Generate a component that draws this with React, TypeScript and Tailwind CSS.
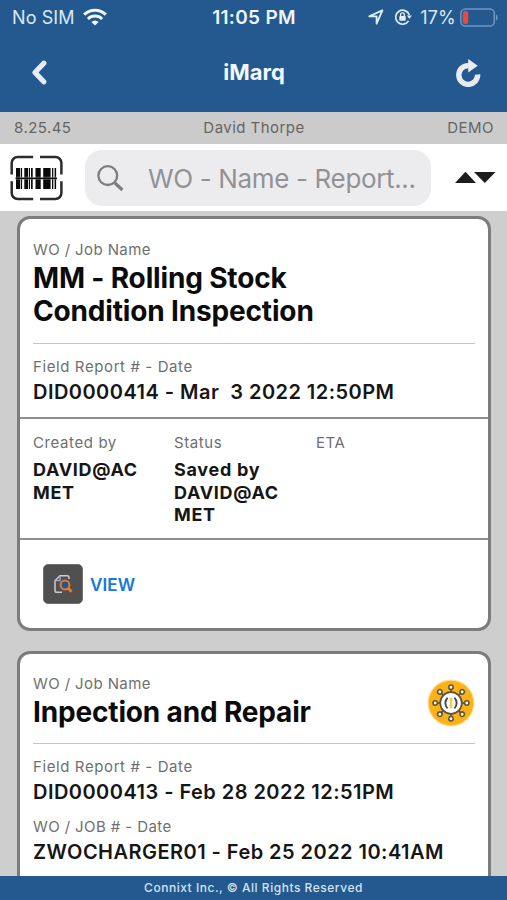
import type { ReactNode } from 'react'

function WifiIcon() {
  return (
    <svg width="24" height="18" viewBox="0 0 24 18" fill="none">
      <path d="M1.2 6.6a15.4 15.4 0 0 1 21.6 0" stroke="#f4f8fc" strokeWidth="3" />
      <path d="M4.9 10.9a10.2 10.2 0 0 1 14.2 0" stroke="#f4f8fc" strokeWidth="2.8" />
      <path d="M12 17.4l-3.6-3.4a5.4 5.4 0 0 1 7.2 0z" fill="#f4f8fc" />
    </svg>
  )
}

function StatusBar() {
  return (
    <div className="grid h-[34px] grid-cols-3 items-center pl-3 pr-[9px] text-[18px] text-[#dbe8f5]">
      <div className="flex items-center gap-[8px]">
        <span className="tracking-[0.1px]">No SIM</span>
        <WifiIcon />
      </div>
      <div className="whitespace-nowrap pr-[2px] pt-[2px] text-center text-[19px] font-semibold tracking-[0.3px] text-[#eef4fa]">11:05 PM</div>
      <div className="flex items-center justify-end">
        <svg className="mr-[10px] shrink-0" width="16" height="16" viewBox="0 0 16 16" fill="none">
          <path d="M1.3 7.3L14.4 1.4L8.6 14.6V7.4z" stroke="#e3eef8" strokeWidth="1.8" strokeLinejoin="round" />
        </svg>
        <svg className="mr-[8px] shrink-0" width="18" height="18" viewBox="0 0 18 18" fill="none">
          <path d="M14.6 12.9A7 7 0 1 1 15.3 7" stroke="#e3eef8" strokeWidth="1.6" />
          <path d="M12.9 7.4h5l-2.5 3.4z" fill="#e3eef8" />
          <rect x="5.3" y="8" width="6.4" height="4.8" rx=".8" fill="#e3eef8" />
          <path d="M6.6 8.2V6.8a1.9 1.9 0 0 1 3.8 0v1.4" stroke="#e3eef8" strokeWidth="1.3" />
        </svg>
        <span className="tracking-[0.2px]">17%</span>
        <svg className="ml-[4px] shrink-0" width="38" height="19" viewBox="0 0 38 19" fill="none">
          <rect x=".9" y=".9" width="33.4" height="17.2" rx="4.4" stroke="#6f97c2" strokeWidth="1.5" />
          <rect x="2.8" y="3" width="5.4" height="13" rx="2.2" fill="#ee4540" />
          <path d="M36 6.4c2.2 1 2.2 5.2 0 6.2z" fill="#6f97c2" />
        </svg>
      </div>
    </div>
  )
}

function NavBar() {
  return (
    <div className="flex h-[77px] items-center justify-between pl-[31px] pr-[26px]">
      <svg width="17" height="25" viewBox="0 0 17 25" fill="none">
        <path d="M12.8 3.2L4 12.5L12.8 21.8" stroke="#e9ebee" strokeWidth="5.2" strokeLinecap="round" strokeLinejoin="round" />
      </svg>
      <h1 className="ml-[5px] text-[22px] font-bold text-[#f3f7fb]">iMarq</h1>
      <svg width="26" height="28" viewBox="0 0 26 28" fill="none">
        <path d="M22.6 15.5A9.4 9.4 0 1 1 13.8 6.6" stroke="#e9ebee" strokeWidth="5.4" />
        <path d="M13.2 0L22.8 6.7L13.2 13.4z" fill="#e9ebee" />
      </svg>
    </div>
  )
}

// [x, width] of every bar in the scanner icon
const bars = [[6, 4.2], [10.9, 1.2], [14.3, 3.7], [18.8, 1.2], [21, 1.7], [25.5, 5.2], [33.2, 7.4], [42, 1.3], [44.6, 1.5]]

function BarcodeIcon() {
  return (
    <svg width="54" height="46" viewBox="0 0 54 46" fill="none">
      <path
        d="M1.7 19.5V8a6 6 0 0 1 6-6H23.2M30 2H45.4a6 6 0 0 1 6 6V19.5M51.4 26.3V38a6 6 0 0 1-6 6H30M23.2 44H7.7a6 6 0 0 1-6-6V26.3"
        stroke="#2b2b2b"
        strokeWidth="2.5"
      />
      {bars.map(([x, w]) => (
        <rect key={x} x={x} y="13" width={w} height="21" fill="#0b0b0b" />
      ))}
      <path d="M5.5 23.3H47" stroke="#fff" strokeWidth="3" opacity=".4" />
      <path d="M5.5 23.3H47" stroke="#111" strokeWidth="1.8" />
    </svg>
  )
}

function SearchRow() {
  return (
    <div className="flex h-[67px] shrink-0 items-center bg-white pl-[10px] pr-[11px]">
      <BarcodeIcon />
      <div className="ml-[21px] flex h-[56px] w-[346px] items-center rounded-[17px] bg-[#ececef]">
        <svg className="ml-[12px] mt-[2px]" width="27" height="27" viewBox="0 0 27 27" fill="none">
          <circle cx="10.8" cy="10.6" r="9.4" stroke="#7d7d80" strokeWidth="2.3" />
          <path d="M17.8 17.8L25.4 25" stroke="#7d7d80" strokeWidth="3.2" />
        </svg>
        <span className="ml-[24px] mt-[2px] whitespace-nowrap text-[26px] tracking-[-0.35px] text-[#929295]">WO - Name - Report...</span>
      </div>
      <svg className="ml-auto" width="41" height="13" viewBox="0 0 41 13">
        <path d="M0 12L10.5 .8L21 12z" fill="#1c1c1c" />
        <path d="M19 1H40.5L29.8 12z" fill="#1c1c1c" />
      </svg>
    </div>
  )
}

function Label({ children, tight }: { children: ReactNode; tight?: boolean }) {
  return (
    <div className={`text-[15px] font-normal leading-[20px] text-[#6f6f6f] ${tight ? 'tracking-[0.4px]' : 'tracking-[0.6px]'}`}>
      {children}
    </div>
  )
}

function Value({ children }: { children: ReactNode }) {
  return (
    <div className="mt-[1px] whitespace-pre text-[20px] font-semibold leading-[28px] tracking-[0.46px] text-[#161616]">
      {children}
    </div>
  )
}

function ViewIcon() {
  return (
    <div className="flex h-[40px] w-[40px] items-center justify-center rounded-[5px] border border-[#707070] bg-[#505050]">
      <svg width="20" height="20" viewBox="0 0 20 20" fill="none">
        <path d="M16 5V3.5A1.8 1.8 0 0 0 14.2 1.7H7L2 6.7V16.5A1.8 1.8 0 0 0 3.8 18.3H9" stroke="#c9ced3" strokeWidth="1.5" />
        <path d="M7 2V6.6H2.2" stroke="#8fb0d2" strokeWidth="1.4" />
        <circle cx="12" cy="11" r="4.4" fill="#24558b" stroke="#e8792b" strokeWidth="2" />
        <path d="M15 14L18.5 17.7" stroke="#e8792b" strokeWidth="3" />
      </svg>
    </div>
  )
}

const spokes = [0, 45, 90, 135, 180, 225, 270, 315]

function HubBadge() {
  return (
    <svg className="mt-[2px]" width="48" height="48" viewBox="0 0 48 48" fill="none">
      <circle cx="24" cy="24" r="23.5" fill="#fbdc98" />
      <circle cx="24" cy="24" r="22.3" fill="#fbb216" />
      {spokes.map((deg) => (
        <g key={deg} transform={`rotate(${deg} 24 24)`}>
          <path d="M24 13V10" stroke="#5b5340" strokeWidth="1.7" />
          <circle cx="24" cy="8.2" r="2.2" fill="#fff3d3" stroke="#5b5340" strokeWidth="1.5" />
        </g>
      ))}
      <circle cx="24" cy="24" r="10.8" fill="#fff" stroke="#5b5340" strokeWidth="1.7" />
      <path d="M20.6 18.6a7.6 7.6 0 0 0 0 10.8M27.4 18.6a7.6 7.6 0 0 1 0 10.8" stroke="#4a4a4a" strokeWidth="1.9" />
      <path d="M24 18.6V29.4" stroke="#f5cc48" strokeWidth="2.6" />
    </svg>
  )
}

export default function App() {
  return (
    <div className="flex h-[900px] w-[507px] flex-col overflow-hidden bg-[#cecece] font-[Inter,'Liberation_Sans',sans-serif]">
      <header className="h-[112px] shrink-0 bg-[#24598f]">
        <StatusBar />
        <NavBar />
      </header>
      <div className="grid h-[32px] shrink-0 grid-cols-3 items-center bg-[#cbcbcb] pl-[14px] pr-[13px] text-[15px] tracking-[0.45px] text-[#656565]">
        <span>8.25.45</span>
        <span className="text-center">David Thorpe</span>
        <span className="text-right">DEMO</span>
      </div>
      <SearchRow />

      <main className="flex min-h-0 flex-1 flex-col gap-[20px] overflow-hidden pl-[17px] pr-[16px] pt-[5px]">
        <section className="h-[415px] shrink-0 rounded-[13px] border-[3px] border-[#7c7c7c] bg-white">
          <div className="h-[198px] px-[13px] pt-[21px]">
            <Label tight>WO / Job Name</Label>
            <h2 className="mt-[2px] text-[28px] font-bold leading-[33px] tracking-[-0.16px] text-[#0b0b0b]">
              MM - Rolling Stock
              <br />
              Condition Inspection
            </h2>
            <hr className="mt-[15px] border-t-[1.5px] border-[#c4c4c4]" />
            <div className="mt-[13px]">
              <Label>Field Report # - Date</Label>
              <Value>{'DID0000414 - Mar  3 2022 12:50PM'}</Value>
            </div>
          </div>
          <div className="grid h-[123px] grid-cols-[141px_142px_1fr] border-y-2 border-[#8e8e8e] px-[13px] pt-[14px] text-[18px] font-bold leading-[22.7px] tracking-[0.7px] text-[#161616]">
            <div>
              <Label>Created by</Label>
              <p className="mt-[6px]">DAVID@AC<br />MET</p>
            </div>
            <div>
              <Label>Status</Label>
              <p className="mt-[6px]">Saved by<br />DAVID@AC<br />MET</p>
            </div>
            <div>
              <Label>ETA</Label>
            </div>
          </div>
          <div className="flex h-[88px] items-center gap-[7px] pl-[23px]">
            <ViewIcon />
            <span className="mt-[3px] text-[17px] font-semibold tracking-[0.1px] text-[#1478dc]">VIEW</span>
          </div>
        </section>

        <section className="h-[415px] shrink-0 rounded-[13px] border-[3px] border-[#7c7c7c] bg-white px-[13px] pt-[20px]">
          <div className="flex h-[55px] items-center justify-between">
            <div>
              <Label tight>WO / Job Name</Label>
              <h2 className="mt-[2px] text-[28px] font-bold leading-[33px] tracking-[-0.16px] text-[#0b0b0b]">Inpection and Repair</h2>
            </div>
            <HubBadge />
          </div>
          <hr className="mt-[14px] border-t-[1.5px] border-[#c4c4c4]" />
          <div className="mt-[13px]">
            <Label>Field Report # - Date</Label>
            <Value>DID0000413 - Feb 28 2022 12:51PM</Value>
          </div>
          <div className="mt-[11px]">
            <Label tight>WO / JOB # - Date</Label>
            <Value>ZWOCHARGER01 - Feb 25 2022 10:41AM</Value>
          </div>
        </section>
      </main>

      <footer className="flex h-[24px] shrink-0 items-center justify-center bg-[#24598f] text-[12px] font-medium tracking-[0.52px] text-[#d6e3f0]">
        Connixt Inc., © All Rights Reserved
      </footer>
    </div>
  )
}
